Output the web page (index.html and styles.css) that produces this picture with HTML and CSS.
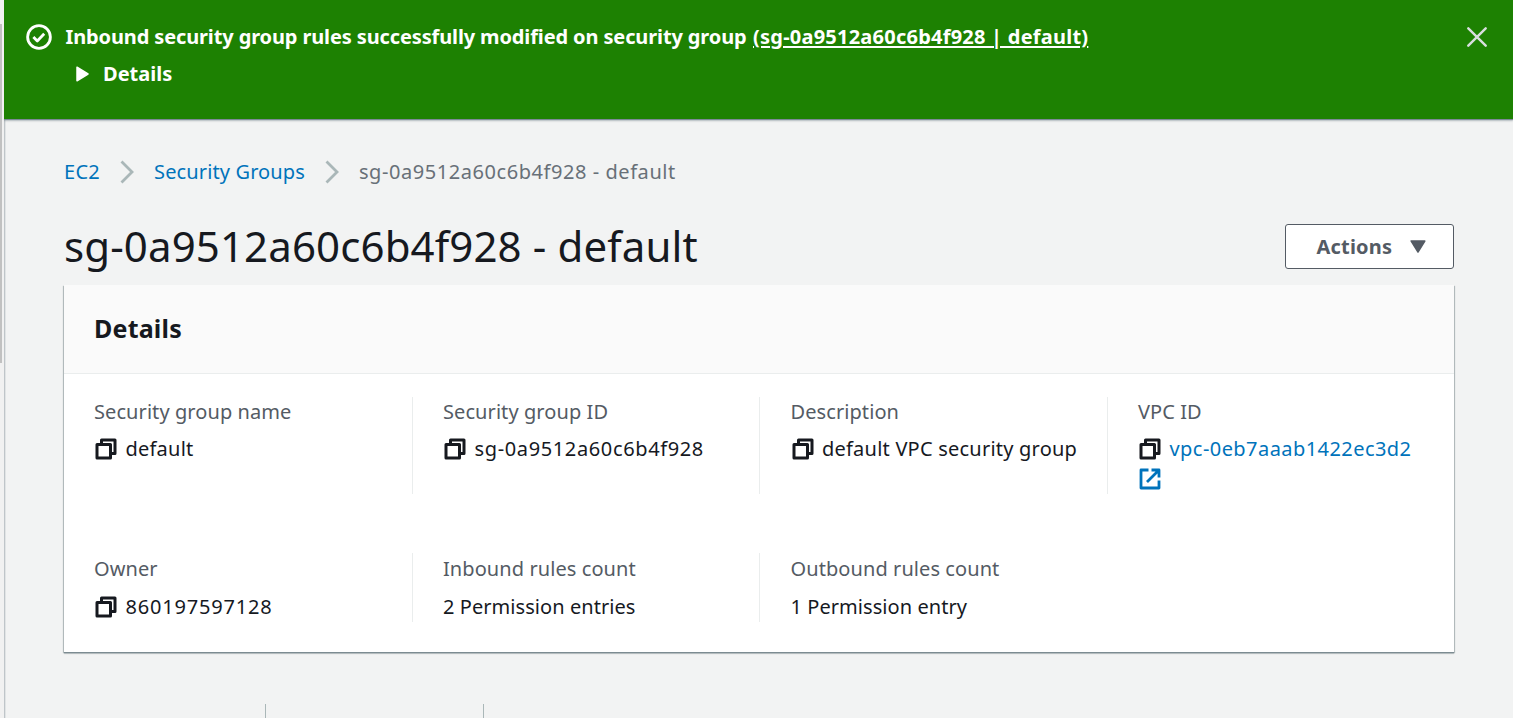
FILE: index.html
```
<!DOCTYPE html>
<html lang="en">
<head>
<meta charset="utf-8">
<title>Security group details</title>
<link rel="stylesheet" href="styles.css">
</head>
<body>
<svg class="defs" aria-hidden="true">
  <symbol id="copy" viewBox="0 0 22 22">
    <path d="M6.5 5V2H20v13.5h-4M2 6.500h13.500V20H2z" fill="none" stroke="currentColor" stroke-width="3" stroke-linejoin="round"/>
  </symbol>
  <symbol id="chevron" viewBox="0 0 14 24">
    <path d="M1.500 1.500L12 12 1.500 22.500" fill="none" stroke="#aab7b8" stroke-width="2.800"/>
  </symbol>
</svg>
<div class="app">
  <div class="rail"><div class="thumb"></div></div>
  <main class="main">
    <section class="flash">
      <svg class="flash-icon" viewBox="0 0 24 24" fill="none" stroke="#fff" stroke-width="2.600" stroke-linejoin="round"><circle cx="12" cy="12" r="10.500"/><path d="M6.800 12l3.600 3.600 6.400-6.600"/></svg>
      <div class="flash-body">
        <div class="flash-title"><span class="flash-message">Inbound security group rules successfully modified on security group</span><a class="flash-link">(sg-0a9512a60c6b4f928 | default)</a></div>
        <div class="flash-details"><svg class="caret" viewBox="0 0 13 16"><path d="M1 1.200v13.600L12 8z" fill="#fff" stroke="#fff" stroke-width="1.500" stroke-linejoin="round"/></svg><span>Details</span></div>
      </div>
      <svg class="close" viewBox="0 0 20 20"><path d="M1.300 1.300l17.400 17.400M18.700 1.300L1.300 18.700" stroke="#d9dedf" stroke-width="2.400" stroke-linecap="round"/></svg>
    </section>
    <div class="content">
      <nav class="crumbs">
        <a class="crumb-root">EC2</a>
        <svg class="chevron"><use href="#chevron"/></svg>
        <a class="crumb-parent">Security Groups</a>
        <svg class="chevron"><use href="#chevron"/></svg>
        <span class="current">sg-0a9512a60c6b4f928 - default</span>
      </nav>
      <header class="heading">
        <h1>sg-0a9512a60c6b4f928 - default</h1>
        <button class="actions"><span>Actions</span><svg class="down" viewBox="0 0 16 13"><path d="M1.200 1h13.600L8 12z" fill="#545b64" stroke="#545b64" stroke-width="1.500" stroke-linejoin="round"/></svg></button>
      </header>
      <section class="panel">
        <div class="panel-head"><h2>Details</h2></div>
        <div class="grid">
          <div class="cell"><div class="label">Security group name</div><div class="value"><svg class="icon"><use href="#copy"/></svg><span>default</span></div></div>
          <div class="cell"><div class="label">Security group ID</div><div class="value"><svg class="icon"><use href="#copy"/></svg><span class="group-id">sg-0a9512a60c6b4f928</span></div></div>
          <div class="cell"><div class="label">Description</div><div class="value"><svg class="icon"><use href="#copy"/></svg><span>default VPC security group</span></div></div>
          <div class="cell"><div class="label">VPC ID</div><div class="value"><svg class="icon"><use href="#copy"/></svg><a class="vpc-id">vpc-0eb7aaab1422ec3d2</a></div>
            <svg class="external" viewBox="0 0 22 22" fill="none" stroke="#0073bb" stroke-width="2.800"><path d="M9.500 2H2v18h18v-7.500M12.500 2H20v7.500M19.500 2.500L8 14" stroke-linejoin="round"/></svg></div>
          <div class="cell"><div class="label">Owner</div><div class="value"><svg class="icon"><use href="#copy"/></svg><span class="account-id">860197597128</span></div></div>
          <div class="cell"><div class="label">Inbound rules count</div><div class="value count">2 Permission entries</div></div>
          <div class="cell"><div class="label">Outbound rules count</div><div class="value count">1 Permission entry</div></div>
        </div>
      </section>
      <div class="tabs"><div class="tab tab-first"></div><div class="tab"></div></div>
    </div>
  </main>
</div>
</body>
</html>
```
FILE: styles.css
```
* { box-sizing: border-box; }
body { margin: 0; background: #f2f3f3; color: #16191f; font: 20px/30px "Noto Sans", sans-serif; overflow: hidden; }
h1, h2 { margin: 0; }
a { color: #0073bb; }
svg { display: block; flex: none; }
.defs { position: absolute; width: 0; height: 0; }
.app { display: flex; height: 718px; }
.rail { width: 4px; padding-top: 24px; background: #f1f1f1; }
.thumb { width: 2px; height: 339px; background: #c1c1c1; }
.main { flex: 1; height: 718px; overflow: hidden; box-shadow: inset 1px 0 0 #bfc5c9, inset 2px 0 0 #e1e4e5; }
.flash { display: flex; height: 119px; padding: 22px 26px 0 22px; background: #1d8102; color: #fff; font-weight: 700; box-shadow: 0 1px 1px #7d8998, 0 2px 2px rgba(0, 28, 36, .2); }
.flash-icon { width: 26px; height: 26px; margin-top: 2px; }
.flash-body { flex: 1; padding-left: 13.5px; }
.flash-title { display: flex; gap: 6.5px; height: 37px; white-space: nowrap; }
.flash-message { letter-spacing: -.125px; }
.flash-link { color: #fff; text-decoration: underline; text-underline-offset: 2px; letter-spacing: .23px; }
.flash-details { display: flex; align-items: center; padding-left: 10.5px; gap: 14px; }
.caret { width: 13px; height: 16px; }
.close { width: 20px; height: 20px; margin-top: 5px; }
.content { padding: 38px 59px 0 60px; }
.crumbs { display: flex; align-items: center; height: 30px; white-space: nowrap; }
.crumb-root { letter-spacing: .3px; }
.crumb-parent { letter-spacing: .12px; }
.chevron { width: 14px; height: 24px; margin: 0 20px; }
.current { color: #687078; letter-spacing: .56px; }
.heading { display: flex; justify-content: space-between; height: 98px; padding-top: 37px; }
h1 { margin-top: -1px; font-size: 42px; font-weight: 400; line-height: 46px; letter-spacing: .12px; white-space: nowrap; }
.actions { display: flex; align-items: center; justify-content: space-between; width: 169px; height: 45px; padding: 0 27px 0 30.5px; background: #fff; border: 1px solid #545b64; border-radius: 3px; color: #545b64; font: 700 20px/30px "Noto Sans", sans-serif; letter-spacing: .2px; }
.down { width: 16px; height: 13px; }
.panel { height: 367px; background: #fff; box-shadow: 0 1px 1px #7c8b91, 0 2px 1px rgba(0, 28, 36, .15), 1px 1px 1px rgba(0, 28, 36, .2), -1px 1px 1px rgba(0, 28, 36, .2); }
.panel-head { height: 89px; padding: 28px 30px; background: #fafafa; border-bottom: 1px solid #eaeded; }
h2 { font-size: 25px; line-height: 30px; font-weight: 700; letter-spacing: .2px; }
.grid { display: grid; grid-template-columns: repeat(4, 1fr); grid-template-rows: 97px 69px; row-gap: 59px; padding-top: 23px; }
.cell { padding-left: 30.5px; border-left: 1px solid #eaeded; white-space: nowrap; }
.cell:nth-child(4n + 1) { padding-left: 29px; border-color: transparent; }
.cell:nth-child(n + 5) { padding-top: 1px; }
.label { height: 37px; color: #545b64; letter-spacing: .08px; }
.value { display: flex; align-items: center; gap: 8.5px; height: 30px; letter-spacing: .22px; }
.cell:nth-child(n + 5) .label { height: 38px; }
.count { letter-spacing: .06px; }
.group-id { letter-spacing: .63px; }
.vpc-id { letter-spacing: .44px; }
.account-id { letter-spacing: .82px; }
.icon, .external { width: 22px; height: 22px; margin-left: 1px; }
.external { margin-top: 4px; }
.tabs { display: flex; height: 14px; margin-top: 52px; }
.tab { width: 218px; border-right: 1px solid #aab7b8; }
.tab-first { width: 202px; }
```
